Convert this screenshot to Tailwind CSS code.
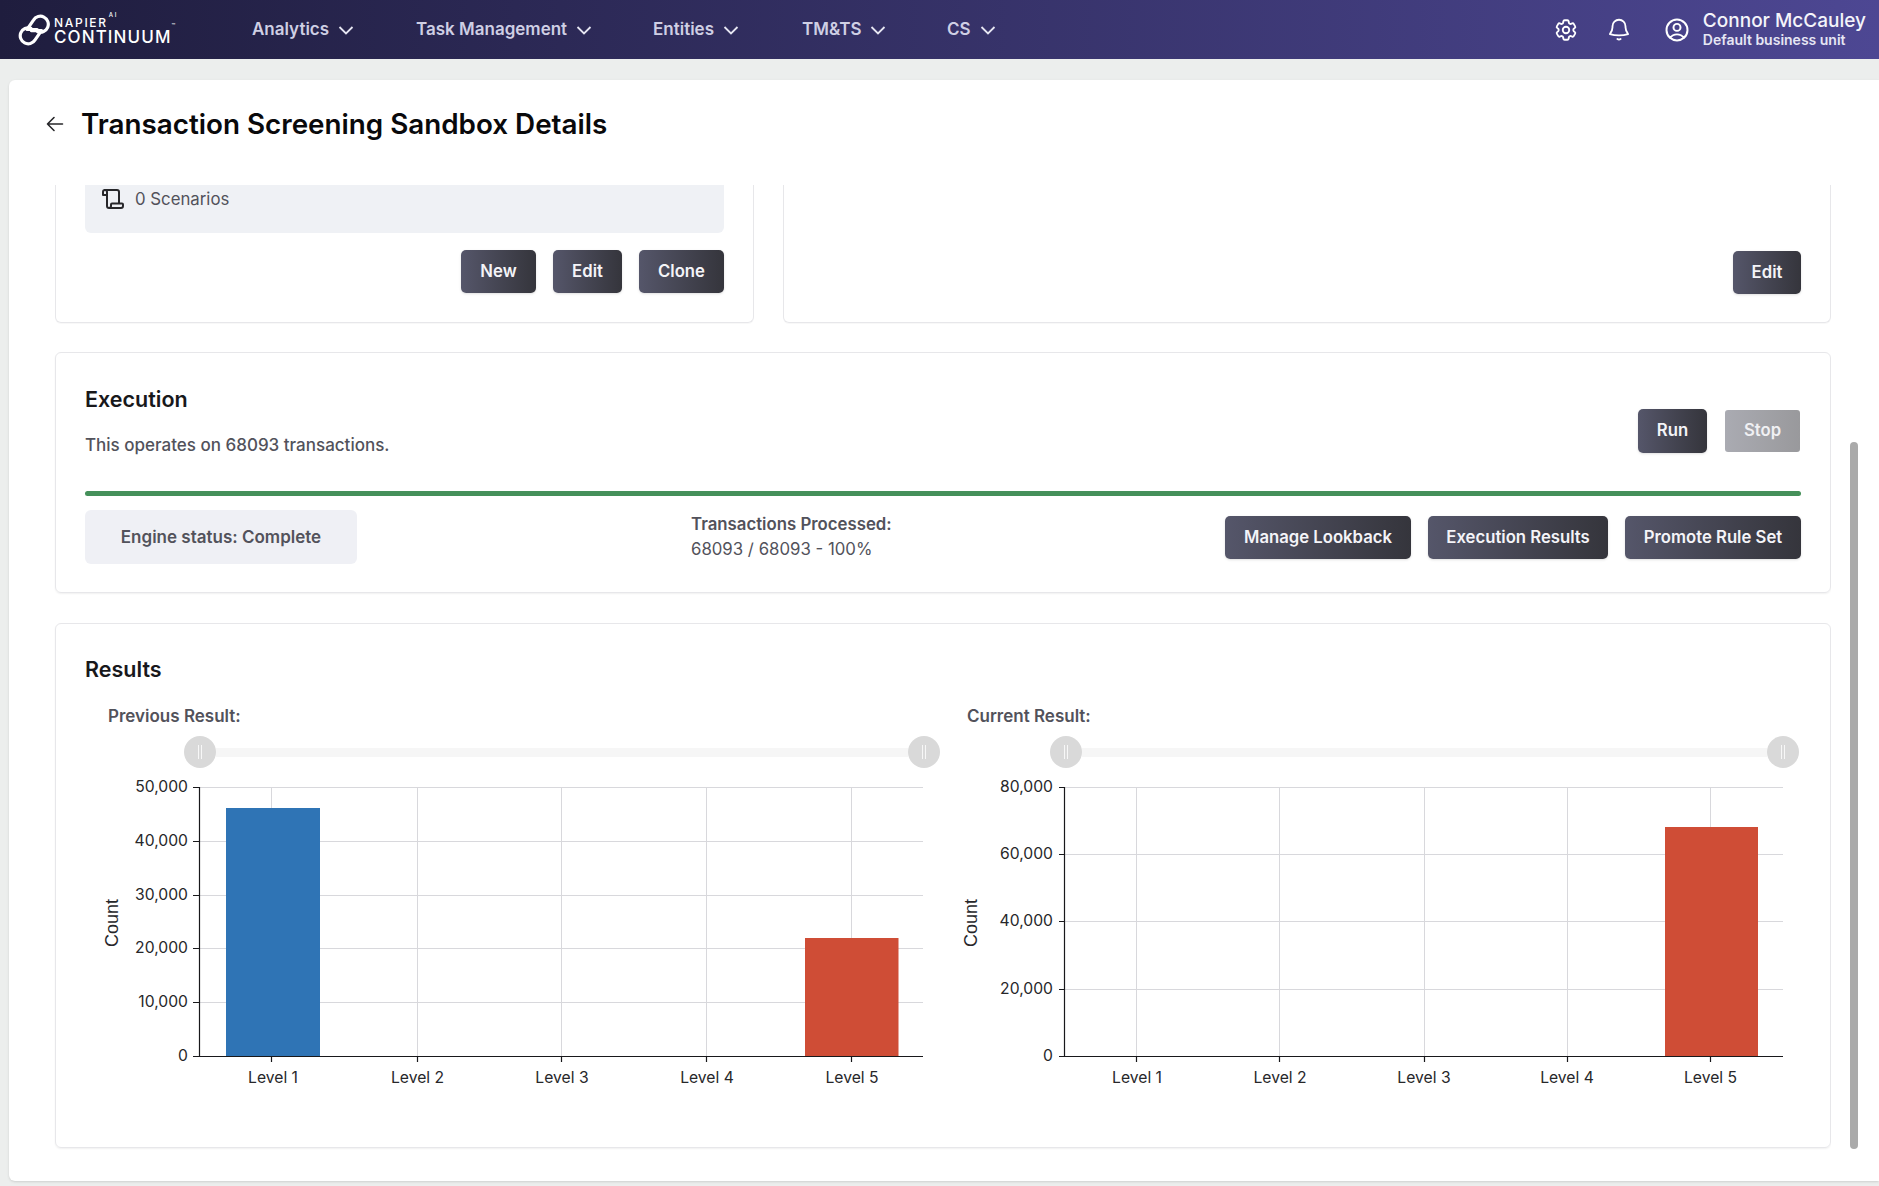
<!DOCTYPE html>
<html>
<head>
<meta charset="utf-8">
<script src="https://cdn.jsdelivr.net/npm/@tailwindcss/browser@4"></script>
</head>
<body>
<div class="relative w-[1879px] h-[1186px] overflow-hidden bg-[#eceeed] font-[family-name:Inter,sans-serif] text-[#3f3f46]">
  <!-- top bar -->
  <header class="h-[59px] flex items-center bg-linear-to-r from-[#1f1d3e] to-[#4d4793] text-[#cfcfe4]">
    <div class="w-[252px] pl-[17px] flex items-center shrink-0">
      <svg width="34" height="32" viewBox="0 0 32 30" fill="none" stroke="#fff" stroke-width="3" stroke-linecap="round" stroke-linejoin="round" class="shrink-0">
        <path d="M13 13.400A7.500 7.500 0 1 0 17 24.300L23 15.500H13.500"/>
        <path d="M19.500 16.600A7.500 7.500 0 1 0 15.500 5.700L9.500 14.500H19"/>
      </svg>
      <div class="ml-[3px] pt-[3px] flex flex-col text-white leading-none">
        <span class="text-[12px] font-medium tracking-[1.7px] h-[12px] flex items-start">NAPIER<sup class="text-[6px] mt-[1px] ml-[1px]">AI</sup></span>
        <span class="text-[17px] font-medium tracking-[1.1px]">CONTINUUM<sup class="text-[6px] align-top">™</sup></span>
      </div>
    </div>
    <nav class="flex items-center text-[17px] font-semibold">
      <div class="flex items-center w-[164px]"><span>Analytics</span><svg class="ml-[9px]" width="16" height="16" viewBox="0 0 16 16" fill="none" stroke="#e6e6f2" stroke-width="1.8"><path d="M1.500 5l6.500 6.500L14.500 5"/></svg></div>
      <div class="flex items-center w-[237px]"><span>Task Management</span><svg class="ml-[9px]" width="16" height="16" viewBox="0 0 16 16" fill="none" stroke="#e6e6f2" stroke-width="1.8"><path d="M1.500 5l6.500 6.500L14.500 5"/></svg></div>
      <div class="flex items-center w-[149px]"><span>Entities</span><svg class="ml-[9px]" width="16" height="16" viewBox="0 0 16 16" fill="none" stroke="#e6e6f2" stroke-width="1.8"><path d="M1.500 5l6.500 6.500L14.500 5"/></svg></div>
      <div class="flex items-center w-[145px]"><span>TM&amp;TS</span><svg class="ml-[9px]" width="16" height="16" viewBox="0 0 16 16" fill="none" stroke="#e6e6f2" stroke-width="1.8"><path d="M1.500 5l6.500 6.500L14.500 5"/></svg></div>
      <div class="flex items-center"><span>CS</span><svg class="ml-[9px]" width="16" height="16" viewBox="0 0 16 16" fill="none" stroke="#e6e6f2" stroke-width="1.8"><path d="M1.500 5l6.500 6.500L14.500 5"/></svg></div>
    </nav>
    <div class="ml-auto flex items-center text-white pr-[13px]">
      <svg width="26" height="26" viewBox="0 0 24 24" fill="none" stroke="#fff" stroke-width="1.7" stroke-linecap="round" stroke-linejoin="round"><path d="M9.594 3.940c.09-.542.56-.94 1.11-.94h2.593c.55 0 1.02.398 1.11.94l.213 1.281c.063.374.313.686.645.87.074.04.147.083.22.127.325.196.72.257 1.075.124l1.217-.456a1.125 1.125 0 0 1 1.37.49l1.296 2.247a1.125 1.125 0 0 1-.26 1.431l-1.003.827c-.293.241-.438.613-.43.992a7.723 7.723 0 0 1 0 .255c-.008.378.137.75.43.991l1.004.827c.424.35.534.955.26 1.43l-1.298 2.247a1.125 1.125 0 0 1-1.369.491l-1.217-.456c-.355-.133-.75-.072-1.076.124a6.47 6.47 0 0 1-.22.128c-.331.183-.581.495-.644.869l-.213 1.281c-.09.543-.56.94-1.11.94h-2.594c-.55 0-1.019-.398-1.11-.94l-.213-1.281c-.062-.374-.312-.686-.644-.87a6.52 6.52 0 0 1-.22-.127c-.325-.196-.72-.257-1.076-.124l-1.217.456a1.125 1.125 0 0 1-1.369-.49l-1.297-2.247a1.125 1.125 0 0 1 .26-1.431l1.004-.827c.292-.24.437-.613.43-.991a6.932 6.932 0 0 1 0-.255c.007-.38-.138-.751-.43-.992l-1.004-.827a1.125 1.125 0 0 1-.26-1.43l1.297-2.247a1.125 1.125 0 0 1 1.37-.491l1.216.456c.356.133.751.072 1.076-.124.072-.044.146-.086.22-.128.332-.183.582-.495.644-.869l.214-1.28Z"/><path d="M15 12a3 3 0 1 1-6 0 3 3 0 0 1 6 0Z"/></svg>
      <svg class="ml-[27px]" width="26" height="26" viewBox="0 0 24 24" fill="none" stroke="#fff" stroke-width="1.7" stroke-linecap="round" stroke-linejoin="round"><path d="M6 8.500a6 6 0 0 1 12 0v1c0 2.300.9 4.400 2.400 6.200-2.600.9-5.400 1.300-8.400 1.300s-5.800-.4-8.400-1.300C5.100 13.900 6 11.800 6 9.500z"/><path d="M10.500 20.300c.9.6 2.100.6 3 0"/></svg>
      <svg class="ml-[31px]" width="28" height="28" viewBox="0 0 24 24" fill="none" stroke="#fff" stroke-width="1.7" stroke-linecap="round" stroke-linejoin="round"><path d="M17.982 18.725A7.488 7.488 0 0 0 12 15.750a7.488 7.488 0 0 0-5.982 2.975m11.963 0a9 9 0 1 0-11.963 0m11.963 0A8.966 8.966 0 0 1 12 21a8.966 8.966 0 0 1-5.982-2.275M15 9.750a3 3 0 1 1-6 0 3 3 0 0 1 6 0Z"/></svg>
      <div class="ml-[12px] flex flex-col">
        <span class="text-[19px] leading-[20px] font-medium text-[#f4f4fa]">Connor McCauley</span>
        <span class="text-[14px] leading-[18px] font-semibold text-[#e6e6f4]">Default business unit</span>
      </div>
    </div>
  </header>

  <!-- page card -->
  <main class="mt-[21px] ml-[9px] h-[1101px] bg-white rounded-tl-md rounded-bl-md shadow-sm">
    <div class="h-[105px] flex items-center pl-[36px] pb-[17px]">
      <svg width="20" height="20" viewBox="0 0 20 20" fill="none" stroke="#27272a" stroke-width="1.6" stroke-linecap="round" stroke-linejoin="round"><path d="M17.500 10H2.500M9 3.500L2.500 10 9 16.500"/></svg>
      <h1 class="ml-[16px] text-[27.8px] leading-[36px] font-semibold text-[#09090b]">Transaction Screening Sandbox Details</h1>
    </div>

    <div class="h-[996px] overflow-hidden pl-[46px] w-[1822px]">
      <!-- partly scrolled cards -->
      <div class="grid grid-cols-[699px_1048px] gap-x-[29px] h-[138px]">
        <section class="border-x border-b border-[#e7e7ea] rounded-b-md px-[29px] pb-[28px] flex flex-col shadow-[0_1px_1px_rgba(0,0,0,0.03)]">
          <div class="h-[48px] bg-[#eff1f5] rounded-b-md pl-[16px] flex items-start pt-[2px]">
            <svg width="24" height="24" viewBox="0 0 24 24" fill="none" stroke="#27272a" stroke-width="2" stroke-linecap="round" stroke-linejoin="round"><path d="M4 3h12a2 2 0 0 1 2 2v11"/><path d="M4 3a2 2 0 0 1 2 2v14a2 2 0 0 0 2 2h12a2 2 0 0 0 2-2v-1.500a1 1 0 0 0-1-1H11a1 1 0 0 0-1 1V19a2 2 0 0 1-2 2"/><path d="M4 3a2 2 0 0 0-2 2v3h4"/></svg>
            <span class="ml-[10px] text-[16.8px] leading-[24px] text-[#52525b]">0 Scenarios</span>
          </div>
          <div class="mt-[17px] flex justify-end gap-[17px]">
            <button class="h-[43px] w-[75px] pt-px rounded-[5px] bg-linear-to-r from-[#55566a] to-[#35353c] text-[#f4f4f8] text-[16.7px] font-semibold shadow-sm">New</button>
            <button class="h-[43px] w-[69px] pt-px rounded-[5px] bg-linear-to-r from-[#55566a] to-[#35353c] text-[#f4f4f8] text-[16.7px] font-semibold shadow-sm">Edit</button>
            <button class="h-[43px] w-[85px] pt-px rounded-[5px] bg-linear-to-r from-[#55566a] to-[#35353c] text-[#f4f4f8] text-[16.7px] font-semibold shadow-sm">Clone</button>
          </div>
        </section>
        <section class="border-x border-b border-[#e7e7ea] rounded-b-md px-[29px] pb-[28px] flex flex-col justify-end items-end shadow-[0_1px_1px_rgba(0,0,0,0.03)]">
          <button class="h-[43px] w-[68px] rounded-[5px] bg-linear-to-r from-[#55566a] to-[#35353c] text-[#f4f4f8] text-[16.7px] font-semibold shadow-sm">Edit</button>
        </section>
      </div>

      <!-- execution -->
      <section class="mt-[29px] w-[1776px] h-[241px] border border-[#e7e7ea] rounded-md px-[29px] pt-[32px] shadow-[0_1px_2px_rgba(0,0,0,0.06)]">
        <div class="flex justify-between">
          <div>
            <h2 class="text-[21.5px] leading-[28px] font-semibold text-[#18181b]">Execution</h2>
            <p class="mt-[20px] text-[17px] leading-[24px] font-medium text-[#52525b]">This operates on 68093 transactions.</p>
          </div>
          <div class="flex items-center gap-[18px] pt-[23px] h-[68px] pr-px">
            <button class="h-[44px] w-[69px] pt-px rounded-[5px] bg-linear-to-r from-[#55566a] to-[#35353c] text-[#f4f4f8] text-[16.7px] font-semibold shadow-sm">Run</button>
            <button class="h-[42px] w-[75px] pt-px rounded-[3px] bg-linear-to-r from-[#aaabb2] to-[#99999c] text-[#f0f0f3] text-[16.7px] font-semibold">Stop</button>
          </div>
        </div>
        <div class="mt-[34px] h-[5px] rounded-full bg-[#45905a]"></div>
        <div class="mt-[14px] flex items-start">
          <div class="w-[272px] h-[54px] pt-[2px] rounded-md bg-[#eff0f5] flex items-center justify-center text-[17px] font-semibold text-[#52525b]">Engine status: Complete</div>
          <div class="ml-[334px] mt-[2px] text-[16.8px] leading-[25px]">
            <div class="font-semibold text-[#52525b]">Transactions Processed:</div>
            <div class="text-[#52525b]">68093 / 68093 - 100%</div>
          </div>
          <div class="ml-auto mt-[6px] flex gap-[17px]">
            <button class="h-[43px] w-[186px] rounded-[5px] bg-linear-to-r from-[#55566a] to-[#35353c] text-[#f4f4f8] text-[16.7px] font-semibold shadow-sm">Manage Lookback</button>
            <button class="h-[43px] w-[180px] rounded-[5px] bg-linear-to-r from-[#55566a] to-[#35353c] text-[#f4f4f8] text-[16.7px] font-semibold shadow-sm">Execution Results</button>
            <button class="h-[43px] w-[176px] rounded-[5px] bg-linear-to-r from-[#55566a] to-[#35353c] text-[#f4f4f8] text-[16.7px] font-semibold shadow-sm">Promote Rule Set</button>
          </div>
        </div>
      </section>

      <!-- results -->
      <section class="mt-[30px] w-[1776px] h-[525px] border border-[#e7e7ea] rounded-md pl-[29px] pt-[31px] shadow-[0_1px_2px_rgba(0,0,0,0.06)]">
        <h2 class="text-[21.5px] leading-[28px] font-semibold text-[#18181b]">Results</h2>
        <div class="mt-[21px] flex">
          <div class="w-[882px] shrink-0">
            <div class="pl-[23px] text-[17px] leading-[24px] font-semibold text-[#52525b]">Previous Result:</div>
            <div class="mt-[8px] ml-[99px] w-[756px] flex items-center">
              <div class="w-8 h-8 rounded-full bg-[#d9d9d9] flex items-center justify-center gap-[2px] shrink-0"><i class="block w-px h-[14px] bg-white/80"></i><i class="block w-px h-[14px] bg-white/80"></i></div>
              <div class="flex-1 h-[9px] bg-[#f6f6f6]"></div>
              <div class="w-8 h-8 rounded-full bg-[#d9d9d9] flex items-center justify-center gap-[2px] shrink-0"><i class="block w-px h-[14px] bg-white/80"></i><i class="block w-px h-[14px] bg-white/80"></i></div>
            </div>
            <svg class="mt-[6px] block overflow-visible" width="860" height="330" viewBox="85 774 860 330" font-family="Inter, sans-serif" font-size="15.7" fill="#27272a">
              <g stroke="#d8d8dc" stroke-width="1">
                <path d="M199.500 787.500H923M199.500 841.500H923M199.500 895.500H923M199.500 948.500H923M199.500 1002.500H923"/>
                <path d="M271.500 787V1056M417.500 787V1056M561.500 787V1056M706.500 787V1056M851.500 787V1056"/>
              </g>
              <rect x="226" y="808" width="94" height="248" fill="#2f74b5"/>
              <rect x="805" y="938" width="93.500" height="118" fill="#cf4d36"/>
              <g stroke="#18181b" stroke-width="1.200">
                <path d="M199.500 787V1056.500M193 787.500H199.500M193 841.500H199.500M193 895.500H199.500M193 948.500H199.500M193 1002.500H199.500M193 1056.500H923"/>
                <path d="M271.500 1056V1062M417.500 1056V1062M561.500 1056V1062M706.500 1056V1062M851.500 1056V1062"/>
              </g>
              <g text-anchor="end">
                <text x="188" y="792">50,000</text><text x="188" y="846">40,000</text><text x="188" y="900">30,000</text><text x="188" y="953">20,000</text><text x="188" y="1007">10,000</text><text x="188" y="1061">0</text>
              </g>
              <g text-anchor="middle">
                <text x="273" y="1083">Level 1</text><text x="417.500" y="1083">Level 2</text><text x="562" y="1083">Level 3</text><text x="707" y="1083">Level 4</text><text x="852" y="1083">Level 5</text>
              </g>
              <text transform="translate(118 923) rotate(-90)" text-anchor="middle" font-family="Liberation Sans, sans-serif" font-size="18">Count</text>
            </svg>
          </div>
          <div class="w-[850px] shrink-0">
            <div class="text-[17px] leading-[24px] font-semibold text-[#52525b]">Current Result:</div>
            <div class="mt-[8px] ml-[83px] w-[749px] flex items-center">
              <div class="w-8 h-8 rounded-full bg-[#d9d9d9] flex items-center justify-center gap-[2px] shrink-0"><i class="block w-px h-[14px] bg-white/80"></i><i class="block w-px h-[14px] bg-white/80"></i></div>
              <div class="flex-1 h-[9px] bg-[#f6f6f6]"></div>
              <div class="w-8 h-8 rounded-full bg-[#d9d9d9] flex items-center justify-center gap-[2px] shrink-0"><i class="block w-px h-[14px] bg-white/80"></i><i class="block w-px h-[14px] bg-white/80"></i></div>
            </div>
            <svg class="mt-[6px] block overflow-visible" width="850" height="330" viewBox="967 774 850 330" font-family="Inter, sans-serif" font-size="15.7" fill="#27272a">
              <g stroke="#d8d8dc" stroke-width="1">
                <path d="M1064.500 787.500H1783M1064.500 854.500H1783M1064.500 921.500H1783M1064.500 989.500H1783"/>
                <path d="M1136.500 787V1056M1279.500 787V1056M1424.500 787V1056M1567.500 787V1056M1710.500 787V1056"/>
              </g>
              <rect x="1665" y="827" width="93" height="229" fill="#cf4d36"/>
              <g stroke="#18181b" stroke-width="1.200">
                <path d="M1064.500 787V1056.500M1059 787.500H1064.500M1059 854.500H1064.500M1059 921.500H1064.500M1059 989.500H1064.500M1059 1056.500H1783"/>
                <path d="M1136.500 1056V1062M1279.500 1056V1062M1424.500 1056V1062M1567.500 1056V1062M1710.500 1056V1062"/>
              </g>
              <g text-anchor="end">
                <text x="1053" y="792">80,000</text><text x="1053" y="859">60,000</text><text x="1053" y="926">40,000</text><text x="1053" y="994">20,000</text><text x="1053" y="1061">0</text>
              </g>
              <g text-anchor="middle">
                <text x="1137" y="1083">Level 1</text><text x="1280" y="1083">Level 2</text><text x="1424" y="1083">Level 3</text><text x="1567" y="1083">Level 4</text><text x="1710.500" y="1083">Level 5</text>
              </g>
              <text transform="translate(977 923) rotate(-90)" text-anchor="middle" font-family="Liberation Sans, sans-serif" font-size="18">Count</text>
            </svg>
          </div>
        </div>
      </section>
    </div>
  </main>

  <!-- overlay scrollbar -->
  <div class="absolute left-[1850px] top-[442px] w-2 h-[707px] rounded-full bg-[#aaaaaa]"></div>
</div>
</body>
</html>
